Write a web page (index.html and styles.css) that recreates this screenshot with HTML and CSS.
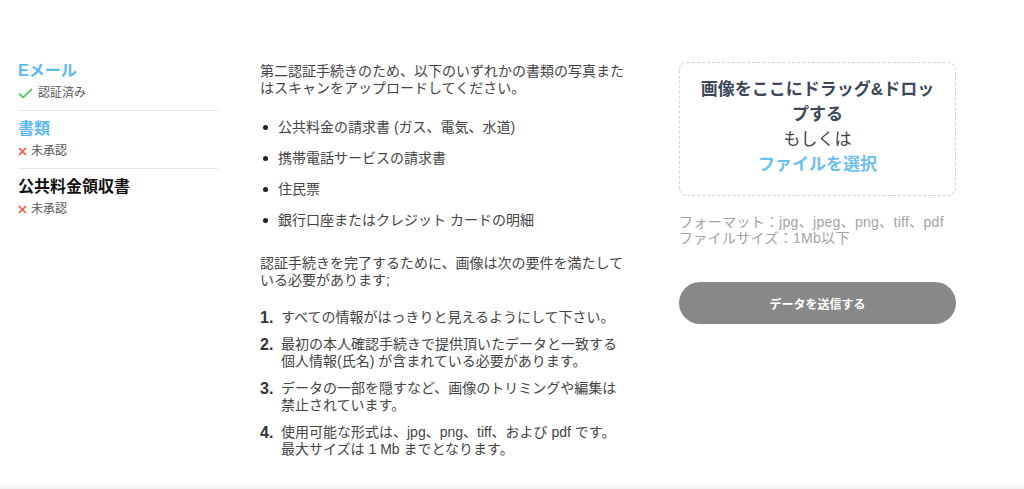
FILE: index.html
```html
<!DOCTYPE html>
<html lang="ja">
<head>
  <meta charset="UTF-8">
  <title>本人確認書類のアップロード</title>
  <link rel="stylesheet" href="styles.css">
</head>
<body>
  <div class="page">
    <main class="content">
      <aside class="steps">
        <div class="step">
          <h3 class="step-title">Eメール</h3>
          <div class="step-status">
            <svg class="icon-check" width="15" height="11" viewBox="0 0 15 11"><path d="M1 5.5 L5 9.5 L14 1" fill="none" stroke="#5cc86c" stroke-width="1.8"/></svg>
            認証済み
          </div>
        </div>
        <div class="step">
          <h3 class="step-title">書類</h3>
          <div class="step-status">
            <svg class="icon-cross" width="9" height="9" viewBox="0 0 9 9"><path d="M1 1 L8 8 M8 1 L1 8" stroke="#ea553f" stroke-width="1.6"/></svg>
            未承認
          </div>
        </div>
        <div class="step">
          <h3 class="step-title dark">公共料金領収書</h3>
          <div class="step-status">
            <svg class="icon-cross" width="9" height="9" viewBox="0 0 9 9"><path d="M1 1 L8 8 M8 1 L1 8" stroke="#ea553f" stroke-width="1.6"/></svg>
            未承認
          </div>
        </div>
      </aside>

      <section class="guide">
        <p class="intro">第二認証手続きのため、以下のいずれかの書類の写真またはスキャンをアップロードしてください。</p>
        <ul class="doc-list">
          <li>公共料金の請求書 (ガス、電気、水道)</li>
          <li>携帯電話サービスの請求書</li>
          <li>住民票</li>
          <li>銀行口座またはクレジット カードの明細</li>
        </ul>
        <p class="require">認証手続きを完了するために、画像は次の要件を満たしている必要があります;</p>
        <ol class="rules">
          <li><span class="num">1.</span><span class="rule-text">すべての情報がはっきりと見えるようにして下さい。</span></li>
          <li><span class="num">2.</span><span class="rule-text">最初の本人確認手続きで提供頂いたデータと一致する<br>個人情報(氏名) が含まれている必要があります。</span></li>
          <li><span class="num">3.</span><span class="rule-text">データの一部を隠すなど、画像のトリミングや編集は<br>禁止されています。</span></li>
          <li><span class="num">4.</span><span class="rule-text">使用可能な形式は、jpg、png、tiff、および pdf です。<br>最大サイズは 1 Mb までとなります。</span></li>
        </ol>
      </section>

      <section class="upload">
        <div class="dropzone">
          <div class="drop-title">画像をここにドラッグ&amp;ドロップする</div>
          <div class="drop-or">もしくは</div>
          <div class="drop-link">ファイルを選択</div>
        </div>
        <div class="file-note">フォーマット：jpg、jpeg、png、tiff、pdf<br>ファイルサイズ：1Mb以下</div>
        <button class="submit-btn">データを送信する</button>
      </section>
    </main>
    <div class="footer-shadow"></div>
  </div>
</body>
</html>
```

FILE: styles.css
```css
body {
  margin: 0;
  font-family: "Liberation Sans", "Noto Sans CJK JP", sans-serif;
  color: #444;
  background: #fff;
}
.page {
  display: flex;
  flex-direction: column;
  min-height: 100vh;
}
.content {
  flex: 1;
  display: flex;
  align-items: flex-start;
  padding: 53px 0 0 18px;
}

/* left: verification steps */
.steps {
  width: 200px;
}
.step {
  padding: 8px 0;
  border-bottom: 1px solid #e6e6e6;
}
.step:last-child {
  border-bottom: none;
}
.step-title {
  margin: 0;
  font-size: 16px;
  line-height: 20px;
  font-weight: 700;
  color: #5cb9ef;
}
.step-title.dark {
  color: #111;
}
.step-status {
  margin-top: 3px;
  display: flex;
  align-items: center;
  gap: 5px;
  font-size: 12px;
  line-height: 18px;
  color: #555;
}
.step-status .icon-cross {
  margin-right: -1px;
}

/* middle: instructions */
.guide {
  width: 372px;
  margin-left: 42px;
  font-size: 14px;
  line-height: 17px;
  color: #444;
}
.guide p {
  margin: 0;
}
.intro {
  padding-top: 10px;
}
.doc-list {
  list-style: none;
  margin: 22px 0 0;
  padding: 0;
}
.doc-list li {
  display: flex;
  align-items: center;
  gap: 10px;
}
.doc-list li::before {
  content: "";
  width: 5px;
  height: 5px;
  border-radius: 50%;
  background: #222;
  margin-left: 3px;
  flex-shrink: 0;
}
.doc-list li + li {
  margin-top: 14px;
}
.guide .require {
  margin-top: 26px;
}
.rules {
  list-style: none;
  margin: 20px 0 0;
  padding: 0;
}
.rules li {
  display: flex;
  align-items: flex-start;
}
.rules li + li {
  margin-top: 10px;
}
.rules .num {
  width: 21px;
  flex-shrink: 0;
  font-size: 16px;
  font-weight: 700;
  color: #333;
}
.rules .rule-text {
  white-space: nowrap;
}

/* right: upload */
.upload {
  width: 277px;
  margin-left: 47px;
}
.dropzone {
  margin-top: 9px;
  border: 1px dashed #d2d2d2;
  border-radius: 8px;
  padding: 14px 15px 18px;
  text-align: center;
  font-size: 17px;
  line-height: 25px;
}
.drop-title {
  font-weight: 700;
  color: #3c4859;
}
.drop-or {
  color: #444;
}
.drop-link {
  font-weight: 700;
  color: #6cc0f0;
  cursor: pointer;
}
.file-note {
  margin-top: 18px;
  font-size: 14px;
  line-height: 16px;
  letter-spacing: 0.3px;
  color: #a3a3a3;
}
.submit-btn {
  display: block;
  width: 100%;
  height: 42px;
  margin-top: 36px;
  border: none;
  border-radius: 21px;
  background: #888;
  color: #fff;
  font-family: inherit;
  font-size: 12px;
  font-weight: 700;
  cursor: pointer;
}

.footer-shadow {
  height: 7px;
  background: linear-gradient(#fff, #f0f0f0);
}
```
